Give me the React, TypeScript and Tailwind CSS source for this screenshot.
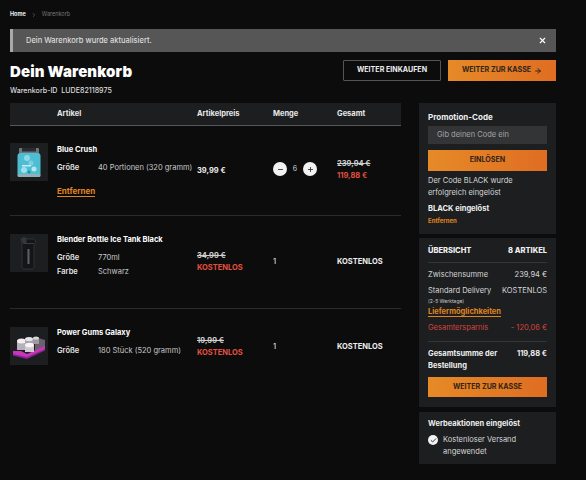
import React from "react";
import { ChevronRight, X, ArrowRight, Minus, Plus, Check } from "lucide-react";

const Jar = () => (
  <svg viewBox="0 0 38 38" className="w-[38px] h-[38px] block">
    <rect x="0" y="0" width="38" height="38" fill="#1c1e20" />
    <rect x="9" y="5" width="20" height="6" rx="1" fill="#6f7578" />
    <rect x="12" y="5" width="14" height="3.5" fill="#2a2d30" />
    <rect x="7.5" y="10" width="23" height="24" rx="3" fill="#4dbdd4" />
    <rect x="7.5" y="31" width="23" height="3" rx="1.5" fill="#8fb0b8" />
    <circle cx="17" cy="15" r="3" fill="#8fd8e8" />
    <circle cx="21" cy="20" r="2.5" fill="#7dd0e2" />
    <circle cx="24" cy="26" r="2.5" fill="#b5e8f1" />
    <circle cx="14" cy="27" r="3" fill="#a0e0ec" />
    <rect x="12" y="22" width="9" height="1.5" fill="#c5eef5" />
    <circle cx="19" cy="29" r="1.5" fill="#2a8ea8" />
  </svg>
);
const Bottle = () => (
  <svg viewBox="0 0 38 38" className="w-[38px] h-[38px] block">
    <rect x="0" y="0" width="38" height="38" fill="#1c1e20" />
    <path d="M11 5l3-2 3 2 7 0 2 3-2 3v22a2 2 0 0 1-2 2h-8a2 2 0 0 1-2-2V11z" fill="#141517" stroke="#3a3c3f" strokeWidth="0.7" />
    <path d="M11 5l3-2 3 2-1 5h-3z" fill="#33363a" />
    <rect x="14" y="9" width="10" height="1" fill="#3a3d40" />
    <rect x="17.5" y="15" width="2" height="15" fill="#5f6265" />
  </svg>
);
const Tray = () => (
  <svg viewBox="0 0 38 38" className="w-[38px] h-[38px] block">
    <rect x="0" y="0" width="38" height="38" fill="#1c1e20" />
    <path d="M25 10l10 3v8l-10 3z" fill="#6d5f70" />
    <path d="M3 24l8 0 6 3 18-8v4L17 31 3 28z" fill="#c737b8" />
    <path d="M3 27l14 3 18-8v1.5L17 32 3 28.5z" fill="#8a2494" />
    <rect x="7" y="14" width="9" height="9" fill="#b6b0b8" />
    <ellipse cx="11.5" cy="14" rx="4.5" ry="2.5" fill="#f0eef1" />
    <rect x="15" y="12" width="8" height="8" fill="#a9a3ac" />
    <ellipse cx="19" cy="12" rx="4" ry="2" fill="#e8e5ea" />
    <rect x="23" y="11" width="6" height="6" fill="#9f99a2" />
    <ellipse cx="26" cy="11" rx="3" ry="1.6" fill="#dad6dc" />
    <rect x="15" y="18" width="9" height="7" fill="#cfcad1" />
    <ellipse cx="19.5" cy="18" rx="4.5" ry="2.3" fill="#f5f3f6" />
  </svg>
);

const Spec = ({ k, v }: { k: string; v: string }) => (
  <div className="flex text-[7.5px] leading-[14px]">
    <span className="w-[41px] shrink-0 font-semibold text-[#e5e5e5]">{k}</span>
    <span className="text-[#c9c9c9] whitespace-nowrap">{v}</span>
  </div>
);

const Row = ({
  img, imgPt, title, specs, price, qty, total, h, link,
}: {
  img: React.ReactNode; imgPt: string; title: string; specs: [string, string][]; price: React.ReactNode; qty: React.ReactNode; total: React.ReactNode; h: string; link?: boolean;
}) => (
  <div className={`grid grid-cols-[47px_140px_76px_64px_64px] ${h}`}>
    <div className={`${imgPt} w-[38px]`}>{img}</div>
    <div className="pt-[19px]">
      <div className="text-[7.5px] leading-[10px] font-bold text-white whitespace-nowrap">{title}</div>
      <div className="mt-[6px] flex flex-col">
        {specs.map(([k, v]) => <Spec key={k} k={k} v={v} />)}
      </div>
      {link && <span className="block w-fit mt-[11px] text-[8px] leading-[10px] font-bold text-[#e08421] border-b border-[#e08421]">Entfernen</span>}
    </div>
    <div className="flex flex-col justify-center">{price}</div>
    <div className="flex items-center">{qty}</div>
    <div className="flex flex-col justify-center">{total}</div>
  </div>
);

const Orange = ({ children, className = "" }: { children: React.ReactNode; className?: string }) => (
  <div className={`flex items-center justify-center gap-[3px] bg-gradient-to-r from-[#e68a27] to-[#df6d22] text-[#2e2419] text-[7.1px] font-bold ${className}`}>
    {children}
  </div>
);

const Was = ({ v }: { v: string }) => (
  <div className="flex flex-col gap-[2px] text-[7.5px] leading-[10px] font-bold">
    <span className="line-through text-[#cfcfcf]">{v}</span>
    <span className="text-[#e2503f]">KOSTENLOS</span>
  </div>
);

export default function App() {
  return (
    <div className="w-[586px] h-[480px] overflow-hidden bg-[#0c0c0d] pl-[10px] pr-[30px] pt-[10px] text-white font-['Inter','Liberation_Sans',sans-serif]">
      <div className="flex items-center h-[9px] text-[5.5px]">
        <span className="font-bold text-[#eeeeee]">Home</span>
        <ChevronRight className="w-[6px] h-[6px] mx-[5px] text-[#888888]" />
        <span className="text-[#777777]">Warenkorb</span>
      </div>

      <div className="mt-[10px] h-[23px] flex items-center justify-between bg-[#565656] border-l-[3px] border-[#a9a9a9] pl-[13px] pr-[9px]">
        <span className="text-[7.5px] font-medium text-[#dddddd]">Dein Warenkorb wurde aktualisiert.</span>
        <X className="w-[9px] h-[9px] text-white" strokeWidth={3} />
      </div>

      <div className="mt-[9px] flex justify-between h-[41px]">
        <div>
          <h1 className="text-[15px] leading-[22px] font-black tracking-[0.1px] text-white">Dein Warenkorb</h1>
          <div className="mt-[3px] text-[7.1px] leading-[10px] font-medium text-[#dcdcdc]">Warenkorb-ID&nbsp; LUDE82118975</div>
        </div>
        <div className="flex gap-[7px] -mt-[1px] h-[21px]">
          <div className="w-[98px] flex items-center justify-center border border-[#555555] rounded-[1px] text-[7.1px] font-bold text-[#eeeeee]">WEITER EINKAUFEN</div>
          <Orange className="w-[108px]">WEITER ZUR KASSE <ArrowRight className="w-[8px] h-[8px]" strokeWidth={3} /></Orange>
        </div>
      </div>

      <div className="mt-[1px] flex gap-[18px] items-start">
        <div className="w-[391px]">
          <div className="grid grid-cols-[47px_140px_76px_64px_64px] h-[23px] items-center bg-[#1c1e20] border-b border-[#55575a] text-[7.5px] font-bold text-[#e8e8e8]">
            <span />
            <span>Artikel</span>
            <span>Artikelpreis</span>
            <span>Menge</span>
            <span>Gesamt</span>
          </div>
          <Row
            h="h-[90px] border-b border-[#2a2b2c]"
            imgPt="pt-[17px]"
            link
            img={<Jar />}
            title="Blue Crush"
            specs={[["Größe", "40 Portionen (320 gramm)"]]}
            price={<span className="text-[7.5px] font-bold text-[#eeeeee]">39,99 €</span>}
            qty={
              <div className="flex items-center -mt-[3px]">
                <span className="w-[14px] h-[14px] rounded-full bg-[#f2f2f2] flex items-center justify-center"><Minus className="w-[7px] h-[7px] text-[#333333]" strokeWidth={3} /></span>
                <span className="w-[16px] text-center text-[7px] text-[#cccccc]">6</span>
                <span className="w-[14px] h-[14px] rounded-full bg-[#f2f2f2] flex items-center justify-center"><Plus className="w-[7px] h-[7px] text-[#333333]" strokeWidth={3} /></span>
              </div>
            }
            total={
              <div className="-mt-[2px] flex flex-col gap-[2px] text-[7.5px] leading-[10px] font-bold">
                <span className="line-through text-[#cfcfcf]">239,94 €</span>
                <span className="text-[#e2503f]">119,88 €</span>
              </div>
            }
          />
          <Row
            h="h-[93px] border-b border-[#2a2b2c]"
            imgPt="pt-[18px]"
            img={<Bottle />}
            title="Blender Bottle Ice Tank Black"
            specs={[["Größe", "770ml"], ["Farbe", "Schwarz"]]}
            price={<Was v="34,99 €" />}
            qty={<span className="text-[7.5px] font-medium text-[#dddddd]">1</span>}
            total={<span className="text-[7.5px] font-bold text-[#eeeeee]">KOSTENLOS</span>}
          />
          <Row
            h="h-[76px]"
            imgPt="pt-[18px]"
            img={<Tray />}
            title="Power Gums Galaxy"
            specs={[["Größe", "180 Stück (520 gramm)"]]}
            price={<Was v="19,99 €" />}
            qty={<span className="text-[7.5px] font-medium text-[#dddddd]">1</span>}
            total={<span className="text-[7.5px] font-bold text-[#eeeeee]">KOSTENLOS</span>}
          />
        </div>

        <div className="w-[137px] flex flex-col gap-[4px]">
          <div className="h-[131px] bg-[#1c1e20] px-[9px] pt-[9px]">
            <div className="text-[8px] leading-[10px] font-bold text-[#eeeeee]">Promotion-Code</div>
            <div className="mt-[4px] h-[18px] bg-[#323436] pl-[9px] flex items-center text-[7.5px] text-[#a5a5a5]">Gib deinen Code ein</div>
            <Orange className="mt-[6px] h-[21px]">EINLÖSEN</Orange>
            <div className="mt-[4px] text-[7.5px] leading-[12px] text-[#d8d8d8]">Der Code BLACK wurde erfolgreich eingelöst</div>
            <div className="mt-[5px] text-[7.5px] leading-[10px] font-bold text-[#eeeeee]">BLACK eingelöst</div>
            <div className="mt-[3px] text-[6px] leading-[8px] font-bold text-[#e08421]">Entfernen</div>
          </div>

          <div className="h-[169px] bg-[#1c1e20] px-[9px] pt-[8px]">
            <div className="flex justify-between pb-[6px] border-b border-[#333537] text-[7.5px] leading-[10px] font-extrabold text-[#f0f0f0]">
              <span>ÜBERSICHT</span><span>8 ARTIKEL</span>
            </div>
            <div className="mt-[6px] flex justify-between text-[7.5px] leading-[12px] text-[#d8d8d8]">
              <span>Zwischensumme</span><span>239,94 €</span>
            </div>
            <div className="mt-[4px] flex justify-between text-[7.5px] leading-[12px] text-[#d8d8d8] whitespace-nowrap">
              <span>Standard Delivery</span><span>KOSTENLOS</span>
            </div>
            <div className="text-[5px] leading-[9px] text-[#cccccc]">(2-5 Werktage)</div>
            <span className="block w-fit mt-[1px] text-[7.5px] leading-[9px] font-bold text-[#e08421] border-b border-[#e08421]">Liefermöglichkeiten</span>
            <div className="mt-[5px] flex justify-between pb-[7px] border-b border-[#333537] text-[7.5px] leading-[12px] text-[#d2453c]">
              <span>Gesamtersparnis</span><span>- 120,06 €</span>
            </div>
            <div className="mt-[6px] flex justify-between text-[7.5px] leading-[12px] font-bold text-[#eeeeee]">
              <span className="w-[75px]">Gesamtsumme der Bestellung</span><span>119,88 €</span>
            </div>
            <Orange className="mt-[5px] h-[20px]">WEITER ZUR KASSE</Orange>
          </div>

          <div className="h-[52px] bg-[#1c1e20] px-[9px] pt-[7px] mt-[1px]">
            <div className="text-[7.5px] leading-[10px] font-bold text-[#eeeeee]">Werbeaktionen eingelöst</div>
            <div className="mt-[5px] flex gap-[5px]">
              <span className="mt-[1px] w-[10px] h-[10px] rounded-full bg-[#f2f2f2] flex items-center justify-center shrink-0"><Check className="w-[7px] h-[7px] text-[#222222]" strokeWidth={3} /></span>
              <span className="text-[7.5px] leading-[12px] text-[#d8d8d8]">Kostenloser Versand angewendet</span>
            </div>
          </div>
        </div>
      </div>
    </div>
  );
}
